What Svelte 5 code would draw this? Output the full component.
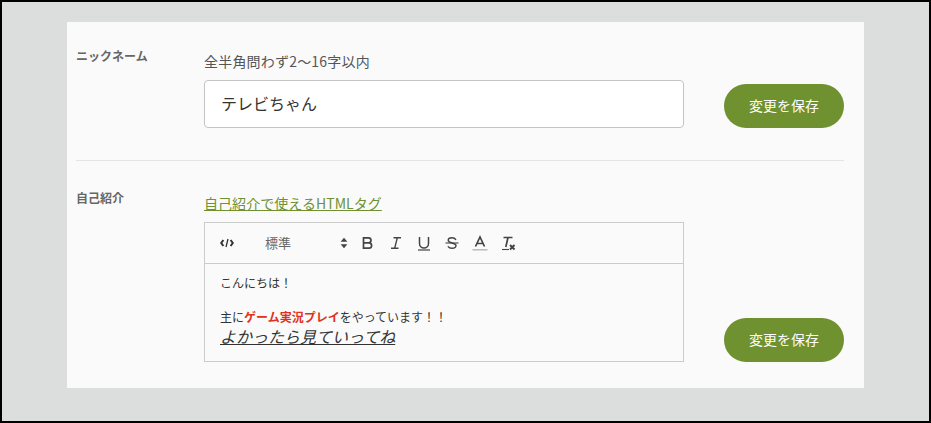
<script>
	const tools = ['bold', 'italic', 'underline', 'strike', 'color', 'clear'];
</script>

<div class="frame">
	<div class="card">
		<section class="row first">
			<div class="label">ニックネーム</div>
			<div class="field">
				<p class="hint">全半角問わず2〜16字以内</p>
				<input class="name-input" type="text" value="テレビちゃん" aria-label="ニックネーム" />
			</div>
			<button type="button" class="save">変更を保存</button>
		</section>

		<section class="row second">
			<div class="label">自己紹介</div>
			<div class="field">
				<a class="tag-link" href="#tags">自己紹介で使えるHTMLタグ</a>
				<div class="editor">
					<div class="toolbar">
						<svg class="code-icon" viewBox="0 0 14 10" width="14" height="10" aria-hidden="true">
							<path d="M3.4 2 1.200 5l2.200 3M10.600 2 12.800 5l-2.200 3" fill="none" stroke="#333" stroke-width="2" />
							<path d="M8 1 6 9" fill="none" stroke="#333" stroke-width="1.300" />
						</svg>
						<div class="format">
							<span>標準</span>
							<svg viewBox="0 0 8 12" width="8" height="12" aria-hidden="true">
								<path d="M4 .8 7.400 4.800H.6ZM4 11.200 .6 7.200h6.800Z" fill="#444" />
							</svg>
						</div>
						<div class="buttons">
							{#each tools as tool}
								<span class="tool">
									<svg viewBox="0 0 16 16" width="16" height="16" aria-hidden="true">
										{#if tool === 'bold'}
											<path d="M3.500 2.800h5a2.500 2.500 0 0 1 0 5h-5Zm0 5h5.400a2.700 2.700 0 0 1 0 5.400H3.500Z" fill="none" stroke="#444" stroke-width="1.700" />
										{:else if tool === 'italic'}
											<path d="M5.500 2.800h7.500M3 13.200h7.500M9.300 2.800 6.700 13.200" fill="none" stroke="#444" stroke-width="1.400" />
										{:else if tool === 'underline'}
											<path d="M3.500 2v6.500a4.500 4.500 0 0 0 9 0V2" fill="none" stroke="#444" stroke-width="1.500" />
											<path d="M2 15h12" stroke="#444" stroke-width="1.200" />
										{:else if tool === 'strike'}
											<path d="M12 4.800C11 3.200 9.600 2.800 8 2.800c-2 0-3.800.9-3.800 2.500 0 3.300 7.800 2 7.800 5.300 0 1.900-1.900 2.700-4 2.700-1.700 0-3.200-.6-4.100-2" fill="none" stroke="#444" stroke-width="1.400" />
											<path d="M1.500 8h13" stroke="#444" stroke-width="1.100" />
										{:else if tool === 'color'}
											<path d="M3.500 11.500 8 2l4.500 9.500M5.200 8.500h5.600" fill="none" stroke="#444" stroke-width="1.700" />
											<path d="M.5 14.800h15" stroke="#bbb" stroke-width="1.500" />
										{:else}
											<path d="M3.500 2.500h9M8 2.500 5.800 12" fill="none" stroke="#444" stroke-width="1.700" />
											<path d="M2 14.500h7" stroke="#444" stroke-width="1.100" />
											<path d="m10 10 4.500 4.500m0-4.500L10 14.500" stroke="#444" stroke-width="1.900" />
										{/if}
									</svg>
								</span>
							{/each}
						</div>
					</div>
					<div class="body">
						<p>こんにちは！</p>
						<p class="blank">&nbsp;</p>
						<p>主に<strong>ゲーム実況プレイ</strong>をやっています！！</p>
						<p class="big"><em><u>よかったら見ていってね</u></em></p>
					</div>
				</div>
			</div>
			<button type="button" class="save">変更を保存</button>
		</section>
	</div>
</div>

<style>
	:global(body) {
		margin: 0;
		font-family: "Noto Sans CJK JP", "Noto Sans", sans-serif;
	}

	.frame {
		box-sizing: border-box;
		width: 931px;
		height: 423px;
		padding: 20px 65px 0;
		background: #dcdedd;
		border: 2px solid #000;
	}

	.card {
		box-sizing: border-box;
		height: 366px;
		padding: 0 20px 0 9px;
		background: #fafafa;
	}

	.row {
		display: grid;
		grid-template-columns: 128px 480px 160px;
		align-items: end;
		box-sizing: border-box;
	}

	.row > .save {
		margin-left: 40px;
	}

	.first {
		height: 139px;
		padding-bottom: 32px;
		border-bottom: 1px solid #e4e4e4;
	}

	.second {
		height: 227px;
		padding-bottom: 26px;
	}

	.label {
		align-self: start;
		font-size: 12px;
		font-weight: 700;
		line-height: 18px;
		color: #666;
	}

	.first .label {
		margin-top: 25px;
	}

	.second .label {
		margin-top: 28px;
	}

	.hint {
		margin: 0 0 8px;
		font-size: 14px;
		line-height: 22px;
		letter-spacing: 0.2px;
		color: #555;
	}

	.name-input {
		display: block;
		box-sizing: border-box;
		width: 480px;
		height: 48px;
		padding: 0 16px 2px;
		background: #fff;
		border: 1px solid #c4c4c4;
		border-radius: 4px;
		font-family: inherit;
		font-size: 16px;
		color: #333;
		outline: none;
	}

	.save {
		width: 120px;
		height: 44px;
		padding: 0 0 2px;
		background: #6f9130;
		border: none;
		border-radius: 22px;
		font-family: inherit;
		font-size: 14px;
		color: #fff;
		cursor: pointer;
	}

	.tag-link {
		display: block;
		margin-bottom: 8px;
		font-size: 14px;
		line-height: 22px;
		letter-spacing: 0.05px;
		color: #6f9130;
		text-decoration: underline;
	}

	.editor {
		box-sizing: border-box;
		width: 480px;
		height: 140px;
		border: 1px solid #ccc;
	}

	.toolbar {
		display: flex;
		align-items: center;
		box-sizing: border-box;
		height: 41px;
		padding-left: 15px;
		border-bottom: 1px solid #ccc;
	}

	.format {
		display: flex;
		align-items: center;
		justify-content: space-between;
		width: 83px;
		margin-left: 31px;
		margin-top: -2px;
		font-size: 13px;
		color: #666;
	}

	.format svg {
		margin-top: 2px;
	}

	.buttons {
		display: flex;
		gap: 12px;
		margin-left: 12px;
	}

	.tool {
		display: block;
		width: 16px;
		height: 16px;
	}

	.tool svg,
	.code-icon,
	.format svg {
		display: block;
	}

	.body {
		padding: 10px 15px 0;
		font-size: 12px;
		line-height: 17px;
		color: #333;
	}

	.body p {
		margin: 0;
	}

	.body strong {
		color: #e03020;
	}

	.body .big {
		margin-top: 1px;
		font-size: 16px;
		line-height: 20px;
	}
</style>
